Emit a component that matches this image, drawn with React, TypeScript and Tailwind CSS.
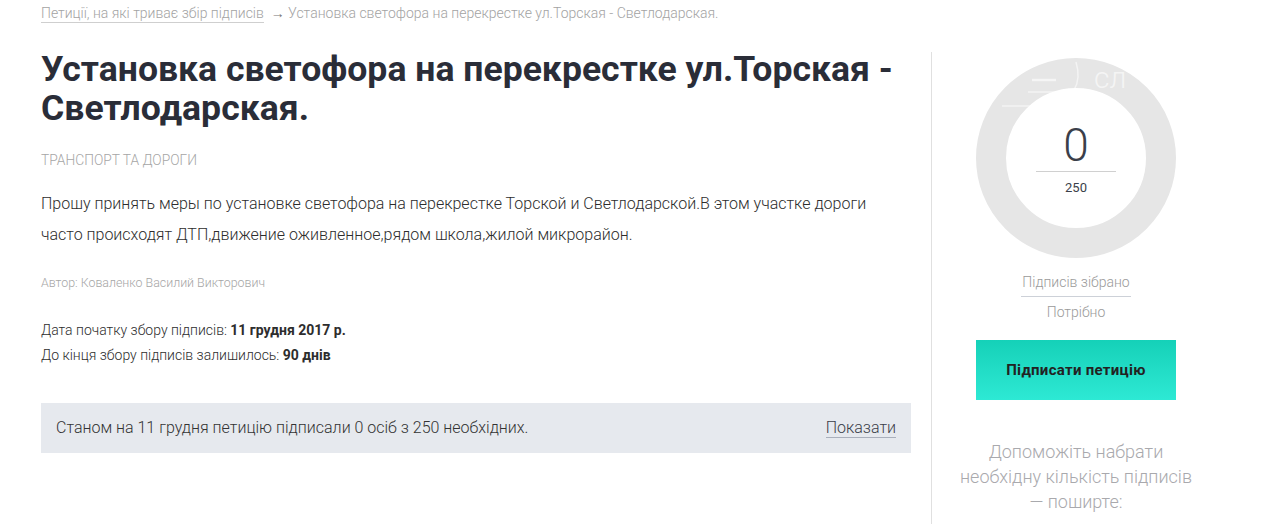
import React from "react";

export default function App() {
  return (
    <div className="w-[1264px] h-[524px] overflow-hidden bg-white font-['Roboto',sans-serif] relative">
      <div className="pl-[41px] pt-[5px] text-[14px] font-light text-[#a3a3a3] leading-[16px]">
        <span className="border-b border-[#cfcfcf] pb-[1px]">Петиції, на які триває збір підписів</span>
        <span> &nbsp;<span className="text-[#777]">→</span> Установка светофора на перекрестке ул.Торская - Светлодарская.</span>
      </div>
      <div className="flex mt-[31px]">
        <div className="w-[870px] ml-[41px]">
          <h1 className="text-[35.6px] font-bold leading-[39px] text-[#2a2d38] -mt-[2px]">
            Установка светофора на перекрестке ул.Торская - Светлодарская.
          </h1>
          <div className="mt-[24px] text-[13.8px] font-light text-[#a6a6a6] uppercase leading-[16px]">Транспорт та дороги</div>
          <p className="mt-[20px] text-[16px] font-light text-[#2d2d2d] leading-[31px]">
            Прошу принять меры по установке светофора на перекрестке Торской и Светлодарской.В этом участке дороги часто происходят ДТП,движение оживленное,рядом школа,жилой микрорайон.
          </p>
          <div className="mt-[25px] text-[12.4px] font-light text-[#a6a6a6] leading-[16px]">Автор: Коваленко Василий Викторович</div>
          <div className="mt-[27px] text-[14px] font-light text-[#2d2d2d] leading-[25px]">
            <div>Дата початку збору підписів: <b className="font-bold">11 грудня 2017 р.</b></div>
            <div>До кінця збору підписів залишилось: <b className="font-bold">90 днів</b></div>
          </div>
          <div className="mt-[35px] h-[50px] bg-[#e6e9ee] flex items-center justify-between px-[15px] text-[16px] font-light text-[#333] ">
            <span>Станом на 11 грудня петицію підписали 0 осіб з 250 необхідних.</span>
            <span className="border-b border-[#a9afbb] leading-[19px] text-[#3a3d48]">Показати</span>
          </div>
        </div>
        <div className="ml-[20px] w-px bg-[#e0e0e0] h-[480px] mt-0"></div>
        <div className="w-[288px] flex flex-col items-center">
          <div className="relative mt-[6px] w-[200px] h-[200px] rounded-full border-[30px] border-[#e6e6e6] flex flex-col items-center">
            <div className="mt-[34px] text-[46px] font-light text-[#3b3f4a] leading-[46px]">0</div>
            <div className="w-[80px] h-px bg-[#d0d0d0] mt-[3px]"></div>
            <div className="text-[13px] text-[#3b3f4a] mt-[8px] leading-[16px]">250</div>
            <svg className="absolute left-[-30px] top-[-30px]" width="200" height="60" viewBox="0 0 200 60">
              <g stroke="#ffffff" strokeOpacity="0.55" fill="none" strokeWidth="1.5">
                <path d="M52 34 L86 34" />
                <path d="M56 22 L80 22" strokeWidth="2.5" strokeOpacity="0.6" />
                <path d="M100 4 C103 14 103 24 98 32 C94 38 88 40 82 40" />
                <path d="M26 48 L84 48" />
              </g>
              <text x="118" y="30" fill="#ffffff" fillOpacity="0.6" fontSize="30" fontWeight="300" fontFamily="Roboto, sans-serif">сл</text>
            </svg>
          </div>
          <div className="mt-[16px] text-[14px] font-light text-[#9a9a9a] leading-[16px] pb-[6px] border-b border-[#cdd1d8] px-[1px]">Підписів зібрано</div>
          <div className="mt-[7px] text-[14px] font-light text-[#9a9a9a] leading-[16px]">Потрібно</div>
          <button className="mt-[20px] w-[200px] h-[60px] bg-gradient-to-b from-[#14d1b8] to-[#2de9d4] text-[15px] font-bold text-[#222] tracking-[0.3px]">Підписати петицію</button>
          <div className="mt-[39px] text-[18px] font-light text-[#a9a9ad] leading-[25px] text-center w-[240px]">
            Допоможіть набрати необхідну кількість підписів — поширте:
          </div>
        </div>
      </div>
    </div>
  );
}
